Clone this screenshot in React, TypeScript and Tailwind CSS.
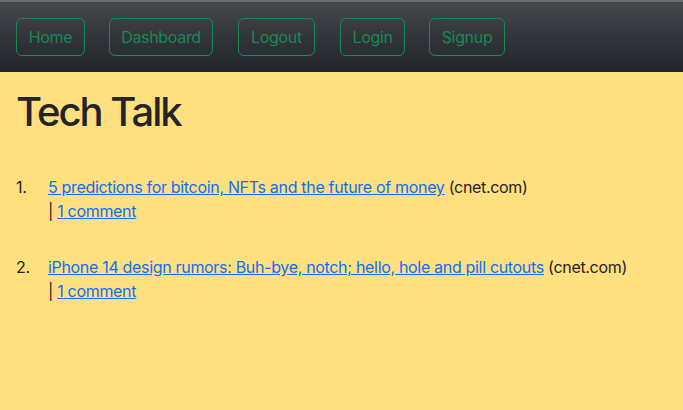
import React from "react";

const navItems = [
  { label: "Home", cls: "w-[69px]" },
  { label: "Dashboard", cls: "w-[104px]" },
  { label: "Logout", cls: "w-[77px] ml-px" },
  { label: "Login", cls: "w-[65px] ml-px" },
  { label: "Signup", cls: "w-[76px]" },
];

const stories = [
  {
    title: "5 predictions for bitcoin, NFTs and the future of money",
    site: "cnet.com",
    comments: 1,
  },
  {
    title: "iPhone 14 design rumors: Buh-bye, notch; hello, hole and pill cutouts",
    site: "cnet.com",
    comments: 1,
  },
];

export default function App() {
  return (
    <div className="min-h-[410px] bg-[#ffdf7e] text-[#212529] font-['Inter','Liberation_Sans',sans-serif] text-base tracking-[-0.02em]">
      <nav className="h-[72px] border-t-2 border-[#6a6c6f] bg-gradient-to-b from-[#45484c] to-[#212529] px-4 pt-4 flex gap-6 items-start">
        {navItems.map((item) => (
          <button
            key={item.label}
            className={`${item.cls} h-[38px] rounded-md border border-[#198754] text-[#198754] leading-6 text-center`}
          >
            {item.label}
          </button>
        ))}
      </nav>

      <div className="px-4">
        <h1 className="mt-4 mb-[39px] text-[40px] leading-[48px] font-medium tracking-[-0.05em]">
          Tech Talk
        </h1>

        <ol className="flex flex-col gap-8">
          {stories.map((s, i) => (
            <li key={i} className="flex leading-6">
              <span className="w-8 shrink-0">{i + 1}.</span>
              <div>
                <div>
                  <a href="#" className="text-[#0d6efd] underline">
                    {s.title}
                  </a>{" "}
                  ({s.site})
                </div>
                <div>
                  <span className="text-[#212529]">|</span>{" "}
                  <a href="#" className="text-[#0d6efd] underline">
                    {s.comments} comment
                  </a>
                </div>
              </div>
            </li>
          ))}
        </ol>
      </div>
    </div>
  );
}
